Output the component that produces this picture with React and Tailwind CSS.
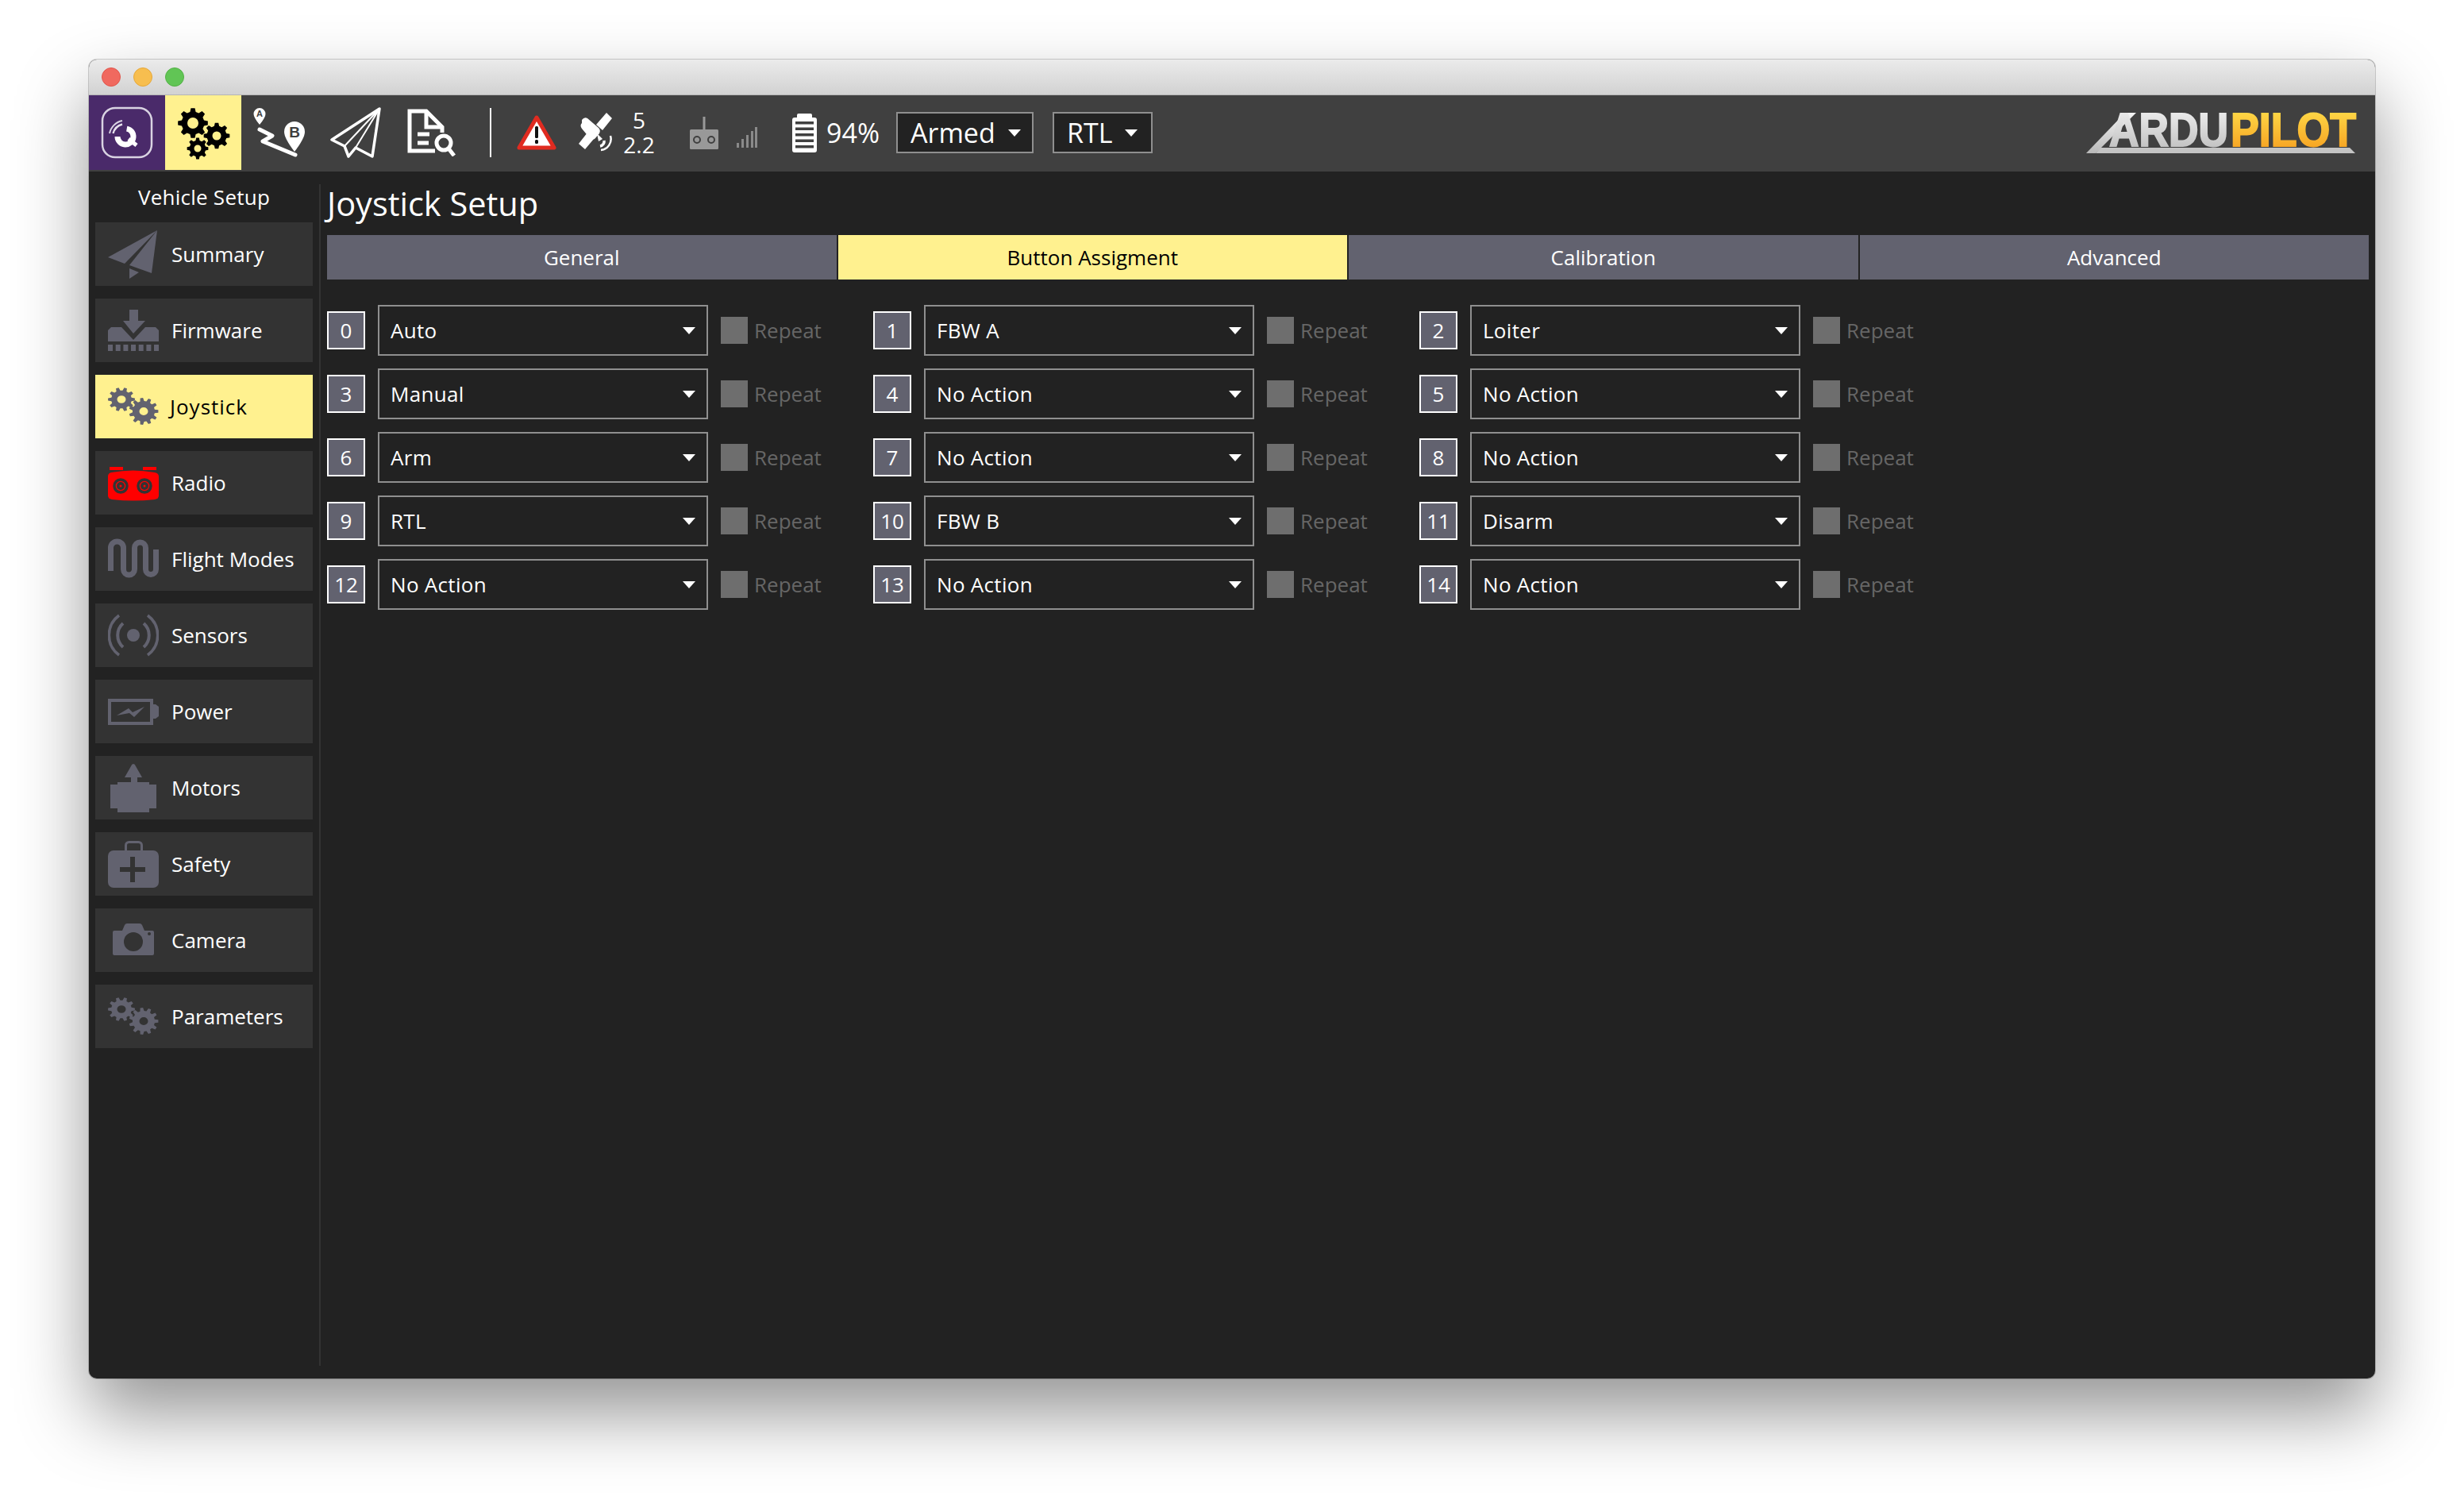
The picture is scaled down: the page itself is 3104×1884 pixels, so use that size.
const gearPath = (cx, cy, r, teeth, hole, squash = 1) => {
  const inner = r * 0.76;
  const step = (Math.PI * 2) / teeth;
  const pts = [];
  for (let i = 0; i < teeth; i++) {
    const a = i * step;
    const add = (rad, off) => {
      pts.push(`${(cx + rad * Math.cos(a + off * step)).toFixed(2)} ${(cy + squash * rad * Math.sin(a + off * step)).toFixed(2)}`);
    };
    add(inner, -0.32);
    add(r, -0.17);
    add(r, 0.17);
    add(inner, 0.32);
  }
  const ry = hole * squash;
  return `M${pts.join('L')}Z M${cx - hole} ${cy} a${hole} ${ry} 0 1 0 ${hole * 2} 0 a${hole} ${ry} 0 1 0 ${-hole * 2} 0Z`;
};

const ICON = '#62626f';

function SmallGears() {
  return (
    <svg width="64" height="64" viewBox="0 0 64 64">
      <path fillRule="evenodd" fill={ICON} d={gearPath(17, 23, 17, 10, 5.5, 0.88)} />
      <path fillRule="evenodd" fill={ICON} d={gearPath(45, 38, 18.5, 11, 5.5, 0.92)} />
    </svg>
  );
}

const sideIcons = {
  Summary: (
    <svg width="64" height="64" viewBox="0 0 64 64">
      <path fill={ICON} d="M62 2 0 36l21 8z" />
      <path fill={ICON} d="M62 2 27 46l28 10z" />
      <path fill={ICON} d="M27 50l12 5-12 8z" />
    </svg>
  ),
  Firmware: (
    <svg width="64" height="64" viewBox="0 0 64 64">
      <path fill={ICON} d="M27 6h11v14h9L32 36 19 20h8z" />
      <path fill={ICON} d="M0 46V32l4-4h13l15 16 15-16h13l4 4v14z" />
      {[0, 9.7, 19.4, 29, 38.7, 48.4, 58].map((x) => (
        <rect key={x} x={x} y="50" width="6" height="8" fill={ICON} />
      ))}
    </svg>
  ),
  Joystick: <SmallGears />,
  Radio: (
    <svg width="64" height="64" viewBox="0 0 64 64">
      <rect x="2" y="12" width="17" height="4" fill="#ff0000" />
      <rect x="44" y="12" width="17" height="4" fill="#ff0000" />
      <path fill="#ff0000" d="M0 24q0-4 4-5 28-5 55 0 5 1 5 5v24q0 4-5 5-27 3-54 0-5-1-5-5z" />
      <circle cx="16" cy="36" r="8" fill="none" stroke="#333" strokeWidth="3.5" />
      <circle cx="46" cy="36" r="8" fill="none" stroke="#333" strokeWidth="3.5" />
      <circle cx="16" cy="36" r="5" fill="#333" />
      <circle cx="46" cy="36" r="5" fill="#333" />
      <circle cx="16" cy="36" r="1.5" fill="#ff0000" />
      <circle cx="46" cy="36" r="1.5" fill="#ff0000" />
    </svg>
  ),
  'Flight Modes': (
    <svg width="64" height="64" viewBox="0 0 64 64">
      <path fill="none" stroke={ICON} strokeWidth="7" d="M3.5 47V18a8 8 0 0 1 16 0v27a7 7 0 0 0 14 0V18a7 7 0 0 1 14 0v27a6.5 6.5 0 0 0 13 0V20" />
    </svg>
  ),
  Sensors: (
    <svg width="64" height="64" viewBox="0 0 64 64" fill="none" stroke={ICON}>
      <circle cx="32" cy="32" r="8" fill={ICON} stroke="none" />
      <path strokeWidth="4" d="M19 17a20 20 0 0 0 0 30M45 17a20 20 0 0 1 0 30" />
      <path strokeWidth="3.5" d="M14 7a31 31 0 0 0 0 50M50 7a31 31 0 0 1 0 50" />
    </svg>
  ),
  Power: (
    <svg width="64" height="64" viewBox="0 0 64 64">
      <rect x="2" y="18" width="53" height="29" fill="none" stroke={ICON} strokeWidth="4" />
      <path fill={ICON} d="M57 23h3l4 3v12l-4 3h-3z" />
      <path fill={ICON} d="M11 37l15-9 5 5 15-7-13 13-6-5z" />
    </svg>
  ),
  Motors: (
    <svg width="64" height="64" viewBox="0 0 64 64">
      <path fill={ICON} d="M32 2q2 0 3 3l8 14h-6v6h15v3h9v30h-9v5H12v-5H3V28h9v-3h17v-6h-8l8-14q1-3 3-3z" />
    </svg>
  ),
  Safety: (
    <svg width="64" height="64" viewBox="0 0 64 64">
      <rect x="22.5" y="4.5" width="20" height="16" rx="4" fill="none" stroke={ICON} strokeWidth="3" />
      <rect x="0" y="15" width="64" height="47" rx="7" fill={ICON} />
      <rect x="15" y="36" width="32" height="6" fill="#333" />
      <rect x="28" y="23" width="6" height="32" fill="#333" />
    </svg>
  ),
  Camera: (
    <svg width="64" height="64" viewBox="0 0 64 64">
      <path fill={ICON} d="M8 20h10l3-7q1-2 3-2h16q2 0 3 2l3 7h10q2 0 2 2v27q0 2-2 2H8q-2 0-2-2V22q0-2 2-2z" />
      <circle cx="32" cy="34" r="12" fill="#333" />
      <circle cx="52" cy="24" r="2" fill="#333" />
    </svg>
  ),
  Parameters: <SmallGears />,
};

const menu = ['Summary', 'Firmware', 'Joystick', 'Radio', 'Flight Modes', 'Sensors', 'Power', 'Motors', 'Safety', 'Camera', 'Parameters'];

const buttons = ['Auto', 'FBW A', 'Loiter', 'Manual', 'No Action', 'No Action', 'Arm', 'No Action', 'No Action', 'RTL', 'FBW B', 'Disarm', 'No Action', 'No Action', 'No Action'];

function Caret({ className = '' }) {
  return (
    <svg width="16" height="9" viewBox="0 0 16 9" className={className}>
      <path d="M0 0h16L8 9z" fill="#fff" />
    </svg>
  );
}

function ButtonRow({ index, action }) {
  return (
    <div className="flex items-center h-16">
      <div className="w-12 h-12 border-2 border-white bg-[#62626f] flex items-center justify-center text-white text-[26px] leading-none">
        {index}
      </div>
      <div className="ml-4 w-[416px] h-16 border-2 border-[#8f8f8f] flex items-center justify-between pl-[14px] pr-[14px] text-white text-[26px] tracking-[0.3px]">
        <span>{action}</span>
        <Caret />
      </div>
      <div className="ml-4 w-[34px] h-[34px] bg-[#6e6e6e]" />
      <span className="ml-2 text-[26px] text-[#666666]">Repeat</span>
    </div>
  );
}

function ToolbarGears() {
  return (
    <svg width="96" height="94" viewBox="208 120 96 94">
      <path fillRule="evenodd" d={gearPath(243, 155, 19, 8, 7)} />
      <path fillRule="evenodd" d={gearPath(273, 171, 16.5, 8, 5.5)} />
      <path fillRule="evenodd" d={gearPath(249, 187, 13.5, 8, 4.5)} />
    </svg>
  );
}

function Logo() {
  return (
    <svg width="343" height="52" viewBox="0 0 343 52" className="ml-auto mr-[21px] overflow-visible">
      <defs>
        <linearGradient id="silver" x1="0" y1="0" x2="0" y2="1">
          <stop offset="0" stopColor="#f4f4f4" />
          <stop offset="1" stopColor="#b9b9b9" />
        </linearGradient>
        <linearGradient id="amber" x1="0" y1="0" x2="0" y2="1">
          <stop offset="0" stopColor="#ffe14d" />
          <stop offset="1" stopColor="#f59a1c" />
        </linearGradient>
      </defs>
      <path fill="url(#silver)" d="M0 52 49 1h14L12 52z" />
      <path fill="#c4c4c4" d="M12 52l6-7h314l7 7z" />
      <text transform="translate(29 43) scale(0.88 1)" fontFamily="'Liberation Sans', sans-serif" fontWeight="700" fontSize="59" fill="url(#silver)" stroke="url(#silver)" strokeWidth="2">ARDU</text>
      <text transform="translate(182 43) scale(0.91 1)" fontFamily="'Liberation Sans', sans-serif" fontWeight="700" fontSize="59" fill="url(#amber)" stroke="url(#amber)" strokeWidth="2">PILOT</text>
    </svg>
  );
}

function Toolbar() {
  return (
    <div className="h-24 bg-[#404040] flex items-start shrink-0">
      <div className="w-24 h-[94px] bg-[#4a2a6a] flex items-center justify-center">
        <svg width="66" height="66" viewBox="0 0 66 66" fill="none">
          <rect x="2" y="2" width="62" height="62" rx="16" stroke="#d9d3e2" strokeWidth="2.5" />
          <path d="M32.700 28.100A10 10 0 1 1 21 38" stroke="#fff" strokeWidth="7" />
          <path d="M35 41l10 8" stroke="#fff" strokeWidth="5" />
          <path d="M15.500 34A16 16 0 0 1 27 22.500" stroke="#e6e1ec" strokeWidth="2.500" />
          <path d="M11 34A20.500 20.500 0 0 1 27 18" stroke="#d9d3e2" strokeWidth="2" />
        </svg>
      </div>
      <div className="w-24 h-[94px] bg-[#fff18f] flex items-center justify-center">
        <ToolbarGears />
      </div>
      <div className="h-[94px] flex items-center">
        <svg width="68" height="64" viewBox="0 0 68 64" className="ml-3">
          <path fill="none" stroke="#fff" strokeWidth="5" strokeLinecap="round" strokeLinejoin="round" d="M11 28l16 8-12 7 41 17" />
          <path fill="#fff" d="M11 1a7.5 7.5 0 0 1 7.5 7.5Q18.500 13 11 22 3.500 13 3.500 8.500A7.500 7.500 0 0 1 11 1z" />
          <path fill="#fff" d="M55 18a13 13 0 0 1 13 13q0 8-13 25Q42 39 42 31a13 13 0 0 1 13-13z" />
          <text x="11" y="12" textAnchor="middle" fontSize="11" fontWeight="700" fill="#404040" fontFamily="'Liberation Sans', sans-serif">A</text>
          <text x="55" y="38" textAnchor="middle" fontSize="19" fontWeight="700" fill="#404040" fontFamily="'Liberation Sans', sans-serif">B</text>
        </svg>
        <svg width="64" height="64" viewBox="0 0 64 64" className="ml-8" fill="none" stroke="#fff" strokeLinejoin="round">
          <path strokeWidth="3.500" d="M62 2 2 41l16 8 5 13 9-11 21 11z" />
          <path strokeWidth="2" d="M62 2 18 49M62 2 32 51" />
        </svg>
        <svg width="61" height="60" viewBox="0 0 61 60" className="ml-[33px]" fill="none" stroke="#fff">
          <path strokeWidth="5" d="M35 53H3V3h21l20 20v7" />
          <path strokeWidth="5" d="M24 3v20h20" />
          <path strokeWidth="5" d="M13 32h15M13 43h14" />
          <circle cx="46" cy="43" r="9" strokeWidth="5" />
          <path strokeWidth="5" d="M52 50l7 9" />
        </svg>
        <div className="ml-[43px] w-0.5 h-[62px] bg-white" />
        <svg width="50" height="46" viewBox="0 0 50 46" className="ml-8">
          <path d="M25 4l22 38H3z" fill="#fff" stroke="#e02b20" strokeWidth="5" strokeLinejoin="round" />
          <rect x="23" y="15" width="4" height="15" rx="1.500" fill="#111" />
          <rect x="23" y="32" width="4" height="5" rx="1.500" fill="#111" />
        </svg>
        <svg width="50" height="50" viewBox="0 0 50 50" className="ml-[27px]">
          <g fill="#fff">
            <path d="M36 0l7 7-12 15-8-7z" />
            <path d="M12 25l8 8-11 13-8-7z" />
            <path d="M5 9q3-4 7-2l14 12q3 3 1 7l-5 6q-3 3-7 0L5 20q-3-4 0-7z" />
            <path d="M24 26l7 7-5 3z" />
          </g>
          <g fill="none" stroke="#fff">
            <path strokeWidth="2.500" d="M41 29a14 14 0 0 1-12 18" />
            <path strokeWidth="3.500" d="M33 35a6 6 0 0 1-5 7" />
          </g>
        </svg>
        <div className="ml-2 w-[38px] flex flex-col items-center text-white text-[28px] leading-[31px]">
          <span>5</span>
          <span>2.2</span>
        </div>
        <svg width="36" height="41" viewBox="0 0 36 41" className="ml-[45px]">
          <rect x="16.500" y="0" width="3" height="18" fill="#999" />
          <rect x="0" y="16" width="36" height="25" rx="1.500" fill="#999" />
          <circle cx="9" cy="29" r="4" fill="none" stroke="#404040" strokeWidth="2" />
          <circle cx="27" cy="29" r="4" fill="none" stroke="#404040" strokeWidth="2" />
        </svg>
        <svg width="26" height="26" viewBox="0 0 26 26" className="ml-[23px] mt-3" fill="#8a8a8a">
          <rect x="0" y="20" width="3" height="6" />
          <rect x="6" y="15" width="3" height="11" />
          <rect x="12" y="10" width="3" height="16" />
          <rect x="18" y="5" width="3" height="21" />
          <rect x="23" y="0" width="3" height="26" />
        </svg>
        <svg width="31" height="49" viewBox="0 0 31 49" className="ml-[44px]">
          <path fill="#fff" d="M8 0h15q2 0 2 2v3h3q3 0 3 3v38q0 3-3 3H3q-3 0-3-3V8q0-3 3-3h3V2q0-2 2-2z" />
          {[10, 17.500, 25, 32.500, 40].map((y) => (
            <rect key={y} x="4" y={y} width="23" height="3.500" fill="#404040" />
          ))}
        </svg>
        <span className="ml-3 w-[65px] text-white text-[34px] leading-none">94%</span>
        <div className="ml-[23px] w-[173px] h-[52px] border-2 border-[#8f8f8f] bg-[#222222] flex items-center pl-4 text-white text-[34px]">
          <span>Armed</span>
          <Caret className="ml-[16px]" />
        </div>
        <div className="ml-6 w-[126px] h-[52px] border-2 border-[#8f8f8f] bg-[#222222] flex items-center pl-4 text-white text-[34px]">
          <span>RTL</span>
          <Caret className="ml-[16px]" />
        </div>
      </div>
      <div className="h-[94px] flex items-center flex-1">
        <Logo />
      </div>
    </div>
  );
}

export default function App() {
  return (
    <div className="w-[3104px] h-[1884px] bg-white pt-[75px] pl-[112px] overflow-hidden font-['Open_Sans',sans-serif]">
      <div className="w-[2880px] h-[1661px] rounded-[10px] overflow-hidden flex flex-col bg-[#222222] shadow-[0_0_0_1px_rgba(0,0,0,0.18),0_44px_90px_rgba(0,0,0,0.42)]">
        <div className="h-[45px] shrink-0 flex items-center gap-4 pl-4 bg-gradient-to-b from-[#ebebeb] to-[#d2d2d2] border-b border-[#b5b5b5]">
          <span className="w-6 h-6 rounded-full bg-[#f0695f] border border-[#e0564c]" />
          <span className="w-6 h-6 rounded-full bg-[#f7be4f] border border-[#e5a73a]" />
          <span className="w-6 h-6 rounded-full bg-[#61c555] border border-[#52b044]" />
        </div>
        <Toolbar />
        <div className="flex-1 flex min-h-0">
          <aside className="w-[292px] shrink-0 my-4 border-r-2 border-[#333333] pl-2 pr-2">
            <div className="h-8 mb-4 flex items-center justify-center text-white text-[26px] tracking-[0.25px]">Vehicle Setup</div>
            <div className="flex flex-col gap-4">
              {menu.map((name) => {
                const active = name === 'Joystick';
                return (
                  <div key={name} className={active ? 'w-[274px] h-20 bg-[#fff18f] flex items-center pl-4 text-black' : 'w-[274px] h-20 bg-[#333333] flex items-center pl-4 text-white'}>
                    {sideIcons[name]}
                    <span className={active ? 'ml-[14px] text-[26px] tracking-[1px]' : 'ml-4 text-[26px]'}>{name}</span>
                  </div>
                );
              })}
            </div>
          </aside>
          <main className="flex-1 pl-2 pr-2 pt-4">
            <h1 className="h-12 mb-4 flex items-center text-white text-[41.5px]">Joystick Setup</h1>
            <div className="flex gap-0.5 h-14">
              {['General', 'Button Assigment', 'Calibration', 'Advanced'].map((t) => (
                <div key={t} className={t === 'Button Assigment' ? 'flex-1 flex items-center justify-center bg-[#fff18f] text-black text-[26px]' : 'flex-1 flex items-center justify-center bg-[#62626f] text-white text-[26px]'}>
                  {t}
                </div>
              ))}
            </div>
            <div className="mt-8 grid grid-cols-[repeat(3,688px)] gap-y-4">
              {buttons.map((action, i) => (
                <ButtonRow key={i} index={i} action={action} />
              ))}
            </div>
          </main>
        </div>
      </div>
    </div>
  );
}
